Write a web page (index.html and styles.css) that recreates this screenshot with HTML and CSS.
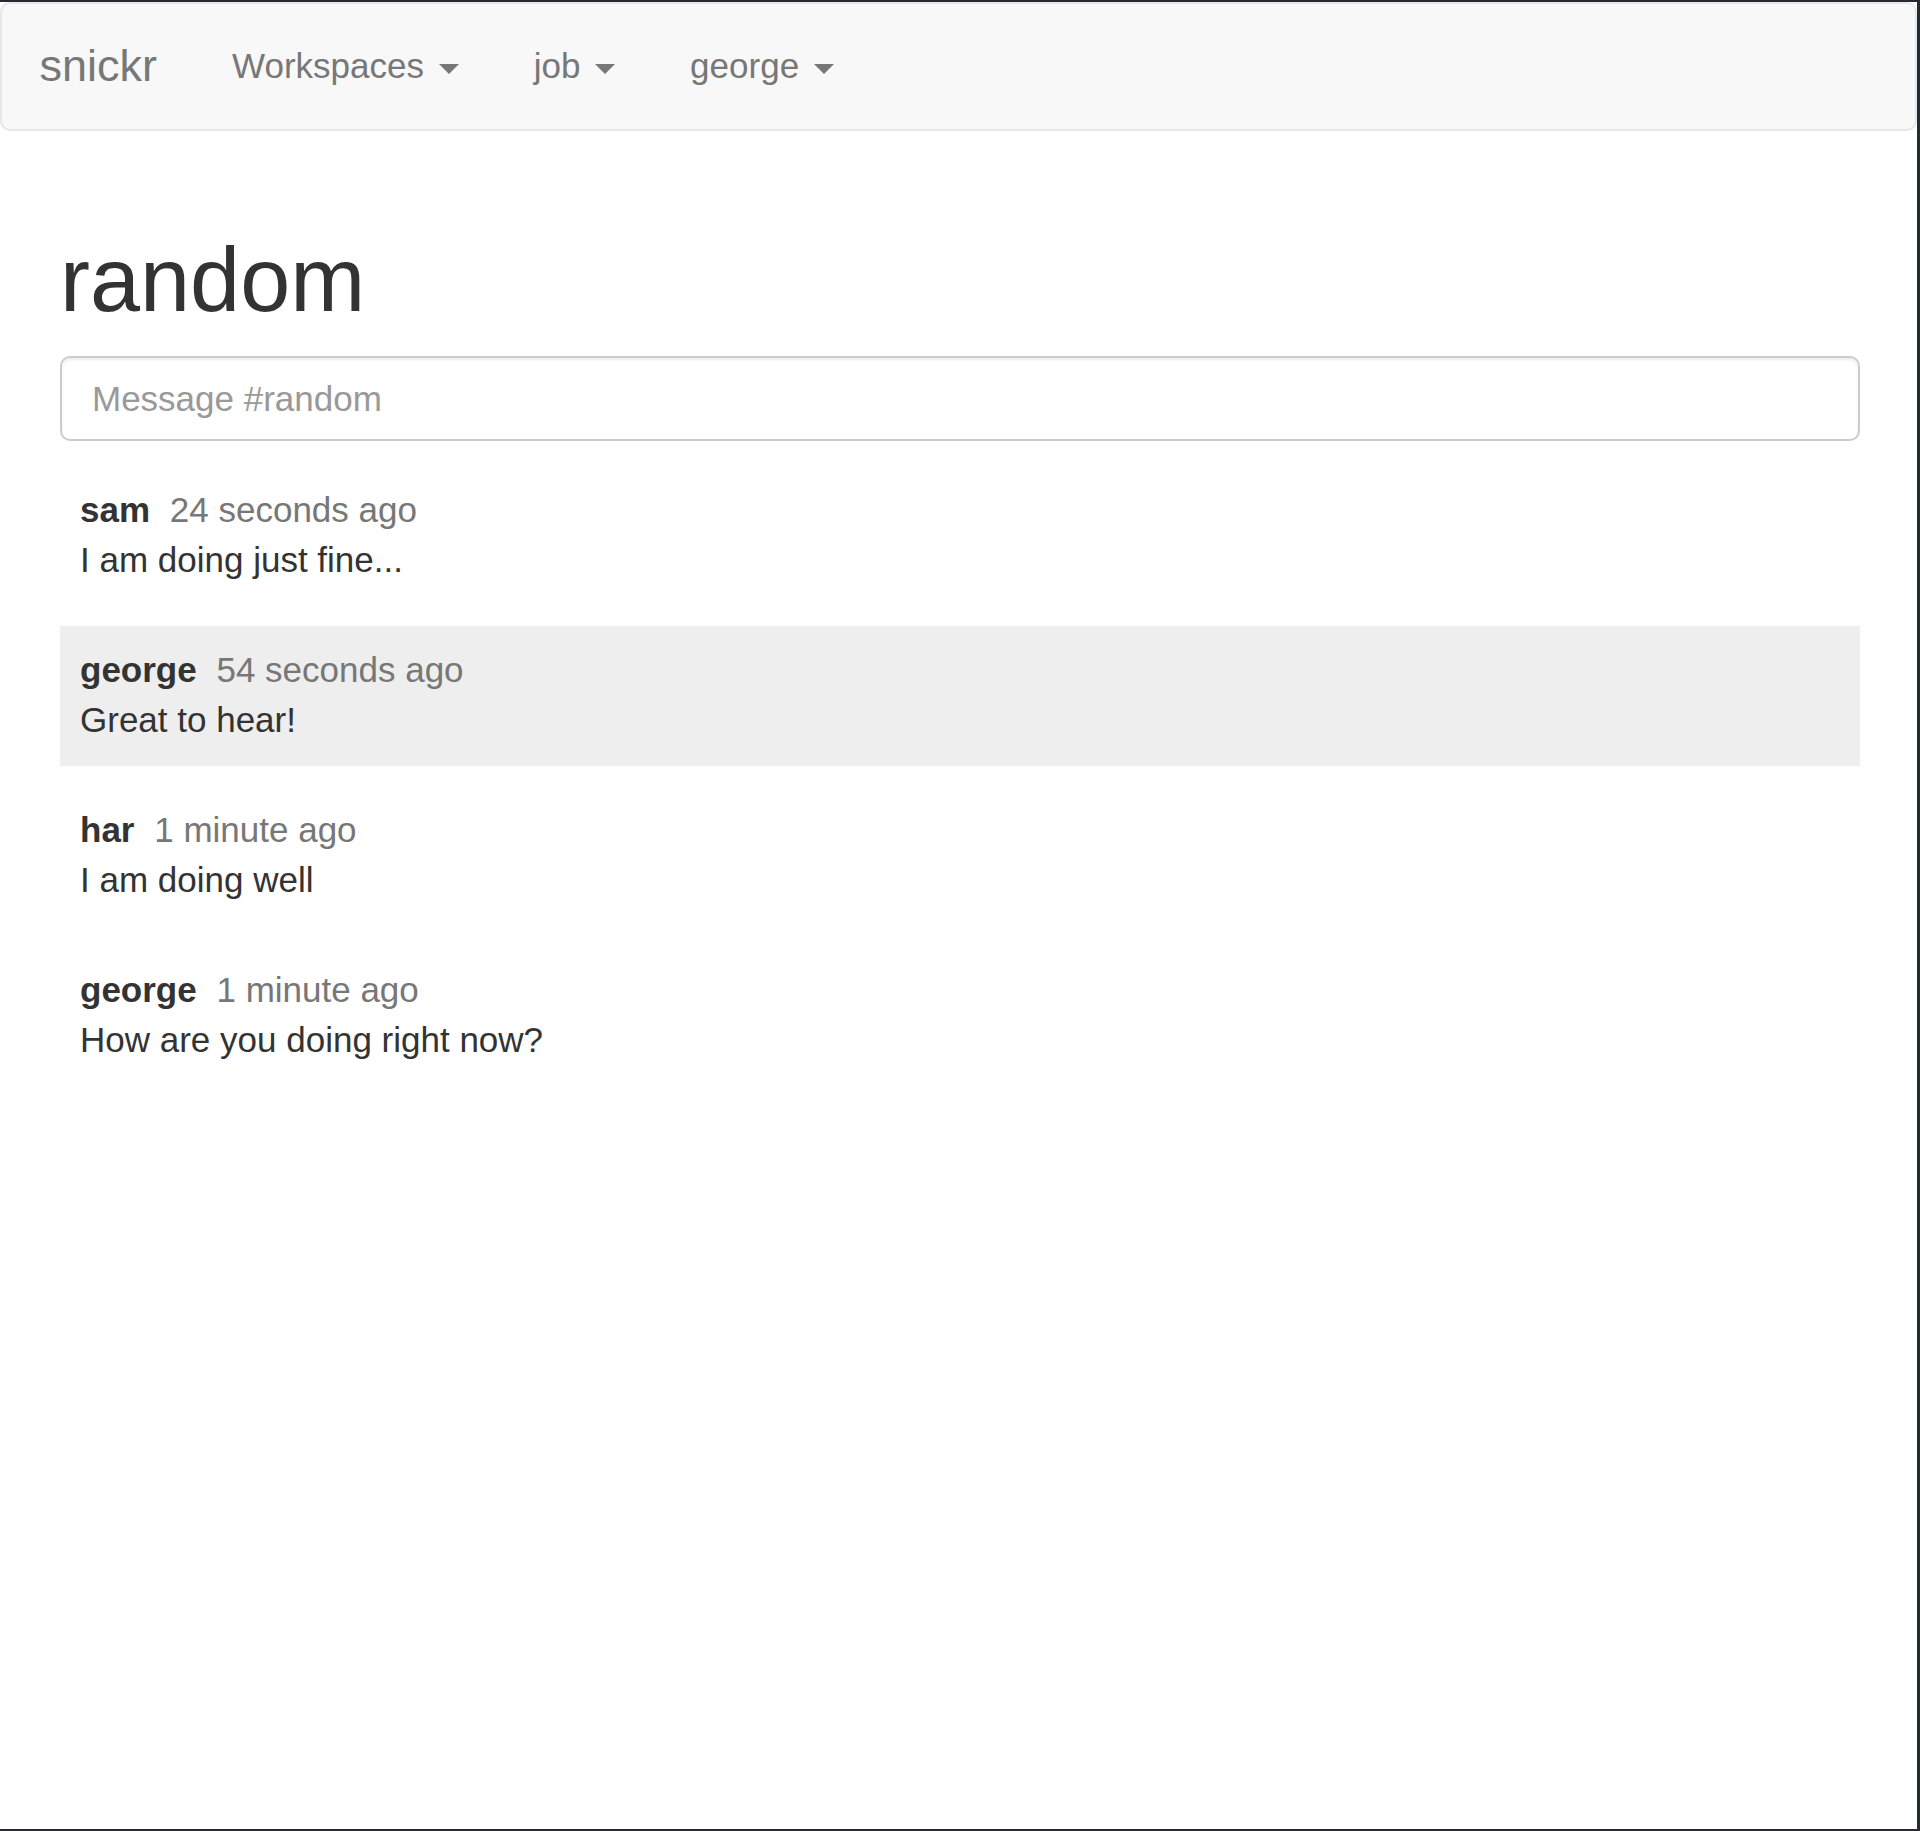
FILE: index.html
```html
<!DOCTYPE html>
<html lang="en">
<head>
<meta charset="utf-8">
<title>snickr - random</title>
<link rel="stylesheet" href="styles.css">
</head>
<body>
<div class="frame">
  <nav class="navbar">
    <a class="brand" href="#">snickr</a>
    <ul class="nav">
      <li><a href="#">Workspaces <span class="caret"></span></a></li>
      <li><a href="#">job <span class="caret"></span></a></li>
      <li><a href="#">george <span class="caret"></span></a></li>
    </ul>
  </nav>
  <main class="container">
    <h1 class="channel-title">random</h1>
    <input class="message-input" type="text" placeholder="Message #random">
    <div class="messages">
      <div class="message">
        <div class="meta"><span class="author">sam</span> <span class="time">24 seconds ago</span></div>
        <div class="body">I am doing just fine...</div>
      </div>
      <div class="message highlighted">
        <div class="meta"><span class="author">george</span> <span class="time">54 seconds ago</span></div>
        <div class="body">Great to hear!</div>
      </div>
      <div class="message">
        <div class="meta"><span class="author">har</span> <span class="time">1 minute ago</span></div>
        <div class="body">I am doing well</div>
      </div>
      <div class="message">
        <div class="meta"><span class="author">george</span> <span class="time">1 minute ago</span></div>
        <div class="body">How are you doing right now?</div>
      </div>
    </div>
  </main>
</div>
</body>
</html>
```
FILE: styles.css
```css
html, body {
  margin: 0;
  padding: 0;
  background: #262a33;
}
body {
  font-family: "Liberation Sans", Arial, Helvetica, sans-serif;
  color: #333;
}
.frame {
  box-sizing: border-box;
  height: 1831px;
  width: 1920px;
  border-top: 2px solid #262a33;
  border-right: 3px solid #262a33;
  border-bottom: 2px solid #262a33;
  background: #fff;
  overflow: hidden;
}
.navbar {
  box-sizing: border-box;
  height: 129px;
  display: flex;
  align-items: center;
  padding-bottom: 1px;
  background: #f8f8f8;
  border: 2px solid #e7e7e7;
  border-radius: 10px;
  margin-bottom: 50px;
}
.brand {
  display: block;
  padding: 0 37.5px;
  font-size: 45px;
  line-height: 50px;
  color: #777;
  text-decoration: none;
}
.nav {
  display: flex;
  list-style: none;
  margin: 0;
  padding: 0;
}
.nav a {
  display: block;
  padding: 0 37.5px;
  font-size: 35px;
  line-height: 50px;
  color: #777;
  text-decoration: none;
}
.caret {
  display: inline-block;
  width: 0;
  height: 0;
  margin-left: 5px;
  vertical-align: middle;
  border-top: 10px solid #777;
  border-left: 10px solid transparent;
  border-right: 10px solid transparent;
}
.container {
  padding: 0 0 0 60px;
  width: 1800px;
  display: flow-root;
}
.channel-title {
  font-size: 90px;
  line-height: 99px;
  font-weight: 500;
  margin: 50px 0 26px;
  color: #333;
}
.message-input {
  box-sizing: border-box;
  display: block;
  width: 100%;
  height: 85px;
  padding: 0 30px;
  font-family: inherit;
  font-size: 35px;
  color: #555;
  border: 2px solid #ccc;
  border-radius: 10px;
  box-shadow: inset 0 2px 3px rgba(0, 0, 0, 0.075);
  outline: none;
  margin: 0 0 25px;
}
.message-input::placeholder {
  color: #999;
}
.messages {
  display: flex;
  flex-direction: column;
  gap: 20px;
}
.message {
  padding: 19px 20px 21px;
  font-size: 35px;
  line-height: 50px;
}
.message.highlighted {
  background: #eee;
}
.author {
  font-weight: bold;
  color: #333;
}
.time {
  color: #777;
  margin-left: 10px;
}
.body {
  color: #333;
}
```
